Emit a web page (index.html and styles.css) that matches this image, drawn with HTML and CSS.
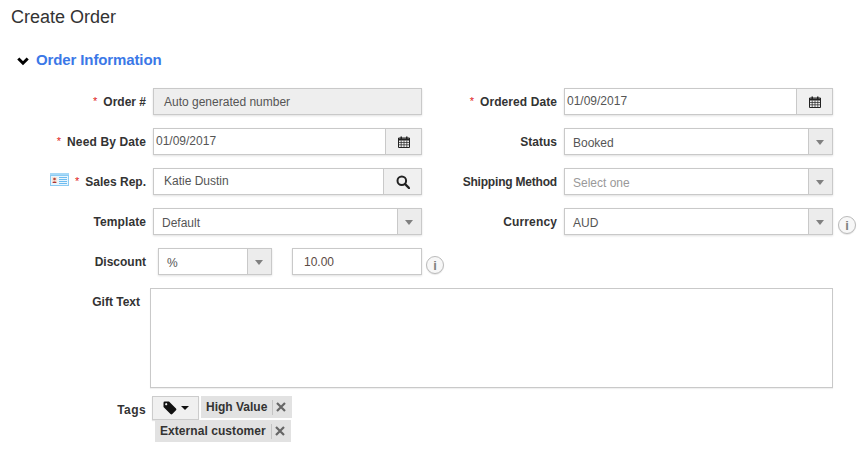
FILE: index.html
```html
<!DOCTYPE html>
<html lang="en">
<head>
<meta charset="utf-8">
<title>Create Order</title>
<link rel="stylesheet" href="styles.css">
</head>
<body>
<h1 class="page-title">Create Order</h1>
<section class="section">
  <h2 class="section-head">
    <svg class="chevron" viewBox="0 0 12 9"><path d="M1.300 1.500 6 6.200l4.700-4.700" fill="none" stroke="#000" stroke-width="3"/></svg>
    <span>Order Information</span>
  </h2>
  <form class="form">
    <div class="row">
      <label class="label"><span class="req">*</span>Order #</label>
      <div class="control"><div class="box readonly">Auto generated number</div></div>
      <label class="label ls-wide"><span class="req">*</span>Ordered Date</label>
      <div class="control">
        <div class="box group"><span class="value date">01/09/2017</span><span class="addon">
          <svg class="icon-cal" viewBox="0 0 12 12"><use href="#cal"/></svg></span></div>
      </div>
    </div>
    <div class="row">
      <label class="label ls-wider"><span class="req">*</span>Need By Date</label>
      <div class="control">
        <div class="box group"><span class="value date">01/09/2017</span><span class="addon">
          <svg class="icon-cal" viewBox="0 0 12 12"><use href="#cal"/></svg></span></div>
      </div>
      <label class="label">Status</label>
      <div class="control">
        <div class="box group"><span class="value select-text">Booked</span><span class="arrow"></span></div>
      </div>
    </div>
    <div class="row">
      <label class="label">
        <svg class="vcard" viewBox="0 0 19 13">
          <rect width="19" height="13" fill="#a5d8f7"/>
          <rect y="2.500" x="0.500" width="18" height="10" fill="#e9f5fd" stroke="#8ccbf2"/>
          <rect x="2" y="4" width="5" height="6" fill="#f7e3d6"/>
          <circle cx="4.500" cy="6" r="1.300" fill="#b5483a"/>
          <path d="M2.500 10c0-2 4-2 4 0z" fill="#a33"/>
          <path d="M9 4.500h8M9 6.500h8M9 8.500h8M9 10.500h8" stroke="#6dbcf0"/>
        </svg>
        <span class="req">*</span>Sales Rep.</label>
      <div class="control">
        <div class="box group"><span class="value select-text indent">Katie Dustin</span><span class="addon addon-search">
          <svg class="icon-search" viewBox="0 0 14 14"><circle cx="5.800" cy="5.800" r="4.300" fill="none" stroke="#222" stroke-width="2"/><path d="m9 9 4 4" stroke="#222" stroke-width="2.400" stroke-linecap="round"/></svg></span></div>
      </div>
      <label class="label ls-tight">Shipping Method</label>
      <div class="control">
        <div class="box group"><span class="value select-text placeholder">Select one</span><span class="arrow"></span></div>
      </div>
    </div>
    <div class="row">
      <label class="label ls-wide">Template</label>
      <div class="control">
        <div class="box group"><span class="value select-text">Default</span><span class="arrow"></span></div>
      </div>
      <label class="label ls-wider">Currency</label>
      <div class="control">
        <div class="box group"><span class="value select-text">AUD</span><span class="arrow"></span></div>
      </div>
      <span class="info"><i>i</i></span>
    </div>
    <div class="row">
      <label class="label">Discount</label>
      <div class="control discount">
        <div class="box group discount-type"><span class="value pct">%</span><span class="arrow"></span></div>
        <div class="box discount-value">10.00</div>
      </div>
      <span class="info info-inline"><i>i</i></span>
    </div>
    <div class="row gift-row">
      <label class="label gift-label">Gift Text</label>
      <div class="gift-box"></div>
    </div>
    <div class="tags-row">
      <label class="label tags-label">Tags</label>
      <div class="tags">
        <button type="button" class="tag-btn">
          <svg class="icon-tag" viewBox="0 0 14 14"><path d="M0.500 1.800A1.300 1.300 0 0 1 1.800.5H6L13 7.500a1.300 1.300 0 0 1 0 1.800L9.300 13a1.300 1.300 0 0 1-1.800 0L.5 6zM3.200 2.100a1.100 1.100 0 1 0 .01 0z" fill="#111" fill-rule="evenodd"/></svg>
          <span class="caret"></span>
        </button>
        <span class="chip">High Value<span class="chip-x"><svg viewBox="0 0 10 10"><path d="m1 1 8 8m0-8L1 9" stroke="#666" stroke-width="2.200"/></svg></span></span>
        <span class="chip chip-wide">External customer<span class="chip-x"><svg viewBox="0 0 10 10"><path d="m1 1 8 8m0-8L1 9" stroke="#666" stroke-width="2.200"/></svg></span></span>
      </div>
    </div>
  </form>
</section>
<svg class="defs" width="0" height="0">
  <defs>
    <g id="cal">
      <path d="M1 2h10.500v9.500H.5V2z" fill="none" stroke="#222"/>
      <path d="M.5 2.500h11v2h-11z" fill="#222"/>
      <path d="M2.500.5h1.500v3H2.500zM8 .5h1.500v3H8z" fill="#222"/>
      <path d="M.5 6.500h11M.5 8.800h11M3.200 4.500v7M6 4.500v7M8.800 4.500v7" stroke="#222" stroke-width=".7" fill="none"/>
    </g>
  </defs>
</svg>
</body>
</html>
```
FILE: styles.css
```css
* { box-sizing: border-box; }
html, body { margin: 0; padding: 0; background: #fff; }
body {
  height: 461px;
  overflow: hidden;
  font-family: "Liberation Sans", Arial, sans-serif;
  font-size: 12px;
  color: #333;
}
.page-title {
  margin: 0;
  padding: 7px 0 0 11px;
  font-size: 18px;
  line-height: 20px;
  font-weight: 400;
  color: #333;
}
.section { padding: 23px 0 0 17px; }
.section-head {
  display: flex;
  align-items: center;
  margin: 0;
  height: 20px;
  font-size: 15px;
  line-height: 20px;
  font-weight: 700;
  letter-spacing: -.12px;
  color: #3b78e7;
}
.chevron { width: 12px; height: 9px; margin: 3px 7px 0 0; flex: none; }
.form { margin: 18px 0 0 -17px; }
.row {
  display: grid;
  grid-template-columns: 146px 276px 135px 276px auto;
  align-items: start;
  height: 27px;
  margin-bottom: 13px;
}
.label {
  display: flex;
  justify-content: flex-end;
  align-items: center;
  height: 27px;
  font-weight: 700;
  font-size: 12px;
  color: #333;
  white-space: nowrap;
}
.ls-tight { letter-spacing: -.2px; }
.ls-wide { letter-spacing: .08px; }
.ls-wider { letter-spacing: .13px; }
.vcard { width: 19px; height: 13px; flex: none; margin: -5px 6px 0 0; }
.req { color: #e02020; font-weight: 400; margin-right: 6px; font-size: 11px; position: relative; top: -1px; }
.control { padding-left: 7px; }
.box {
  height: 27px;
  border: 1px solid #c9c9c9;
  box-shadow: 0 1px 2px rgba(0,0,0,.12);
  background: #fff;
  color: #555;
  line-height: 25px;
  font-size: 12px;
}
.readonly { background: #eee; padding-left: 10px; padding-top: 1px; }
.group { display: flex; }
.value { flex: 1; min-width: 0; }
.date { padding-left: 2px; }
.select-text { padding-left: 8px; padding-top: 2px; }
.indent { padding-left: 10px; padding-top: 0; }
.placeholder { color: #999; }
.addon {
  display: flex;
  align-items: center;
  justify-content: center;
  flex: none;
  width: 36px;
  background: #f0f0f0;
  border-left: 1px solid #c9c9c9;
}
.addon-search { width: 38px; }
.icon-cal { width: 12px; height: 12px; }
.icon-search { width: 14px; height: 14px; }
.arrow {
  flex: none;
  width: 24px;
  background: #ececec;
  border-left: 1px solid #c9c9c9;
  position: relative;
}
.arrow::after {
  content: "";
  position: absolute;
  left: 7px;
  top: 11px;
  border: 4px solid transparent;
  border-bottom: 0;
  border-top: 5px solid #808080;
}
.info {
  display: flex;
  align-items: center;
  justify-content: center;
  width: 18px;
  height: 18px;
  margin: 8px 0 0 5px;
  border: 1px solid #bbb;
  border-radius: 50%;
  background: #f7f7f7;
  box-shadow: 0 1px 1px rgba(0,0,0,.1);
}
.info i {
  font-style: normal;
  font-weight: 700;
  font-size: 13px;
  line-height: 1;
  color: #808080;
}
.info-inline { margin-left: 4px; grid-column: 3; }
.discount { display: flex; padding-left: 12px; column-gap: 20px; }
.discount-type { width: 114px; flex: none; }
.pct { padding-left: 8px; padding-top: 2px; }
.discount-value { flex: 1; padding-left: 11px; padding-top: 1px; color: #5b4a44; }
.gift-row { display: flex; height: 100px; margin-bottom: 8px; }
.gift-label { width: 140px; flex: none; align-items: flex-start; height: auto; padding-top: 7px; line-height: 15px; }
.gift-box {
  width: 683px;
  height: 100px;
  margin-left: 10px;
  border: 1px solid #c9c9c9;
  box-shadow: 0 1px 1px rgba(0,0,0,.06);
}
.tags-row { display: flex; align-items: flex-start; }
.tags-label { width: 146px; flex: none; height: 27px; letter-spacing: .4px; }
.tags {
  display: flex;
  flex-wrap: wrap;
  align-items: flex-start;
  width: 160px;
  margin-left: 6px;
  column-gap: 2px;
}
.tag-btn {
  display: flex;
  align-items: center;
  justify-content: center;
  column-gap: 4px;
  width: 47px;
  height: 24px;
  padding: 0;
  border: 1px solid #ccc;
  background: #f0f0f0;
  box-shadow: 0 1px 1px rgba(0,0,0,.1);
}
.icon-tag { width: 14px; height: 14px; }
.caret {
  border: 4px solid transparent;
  border-bottom: 0;
  border-top: 4px solid #111;
}
.chip {
  display: inline-flex;
  align-items: center;
  height: 22px;
  padding-left: 5px;
  background: #e2e2e2;
  font-weight: 700;
  font-size: 12px;
  color: #333;
  white-space: nowrap;
}
.chip-wide { margin: 0 0 0 3px; letter-spacing: .06px; }
.chip-x {
  display: flex;
  align-items: center;
  width: 20px;
  height: 15px;
  margin-left: 5px;
  padding-left: 3px;
  border-left: 1px solid #c4c4c4;
}
.chip-x svg { width: 10px; height: 10px; }
.defs { position: absolute; }
```
